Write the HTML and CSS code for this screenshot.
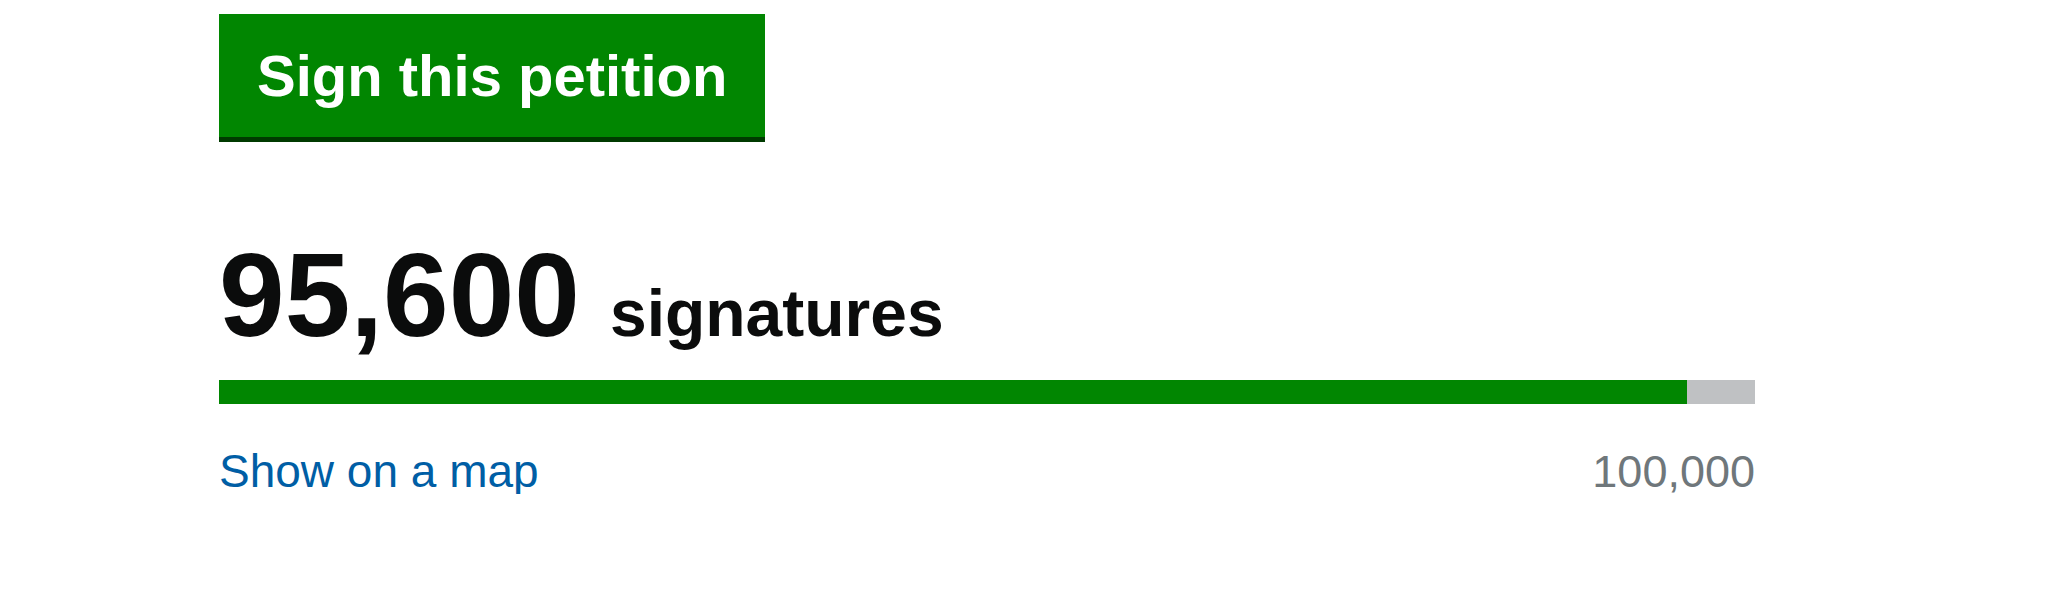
FILE: index.html
```html
<!DOCTYPE html>
<html lang="en">
<head>
    <meta charset="UTF-8">
    <title>Petition</title>
    <link rel="stylesheet" href="styles.css">
</head>
<body>
    <div class="container">
        <a class="button" href="#">Sign this petition</a>

        <div class="signature-count">
            <span class="count">95,600</span>
            <span class="count-label">signatures</span>
        </div>

        <div class="progress-container">
            <div class="progress-bar" style="width: 95.6%"></div>
        </div>

        <div class="progress-footer">
            <a class="map-link" href="#">Show on a map</a>
            <span class="threshold">100,000</span>
        </div>
    </div>
</body>
</html>
```

FILE: styles.css
```css
body {
    margin: 0;
    font-family: "Liberation Sans", Arial, sans-serif;
    background-color: #fff;
    color: #0b0c0c;
}

.container {
    width: 1536px;
    margin-left: 219px;
    padding-top: 14px;
}

/* green call-to-action button with dark bottom edge */
.button {
    display: inline-block;
    padding: 33px 38px 32px;
    font-size: 58px;
    font-weight: bold;
    line-height: 1;
    color: #fff;
    text-decoration: none;
    background-color: #018601;
    border-bottom: 5px solid #003a00;
}

.signature-count {
    display: flex;
    align-items: baseline;
    margin-top: 94px;
}

.count {
    font-size: 118px;
    font-weight: bold;
    line-height: 1;
}

.count-label {
    margin-left: 30px;
    font-size: 66px;
    font-weight: bold;
    line-height: 1;
}

.progress-container {
    height: 24px;
    margin-top: 26px;
    background-color: #bfc1c3;
}

.progress-bar {
    height: 24px;
    background-color: #018601;
}

.progress-footer {
    display: flex;
    justify-content: space-between;
    align-items: baseline;
    margin-top: 44px;
    font-size: 46px;
    line-height: 1;
}

.map-link {
    color: #005ea5;
    text-decoration: none;
}

.threshold {
    font-size: 45px;
    color: #6f777b;
}
```
